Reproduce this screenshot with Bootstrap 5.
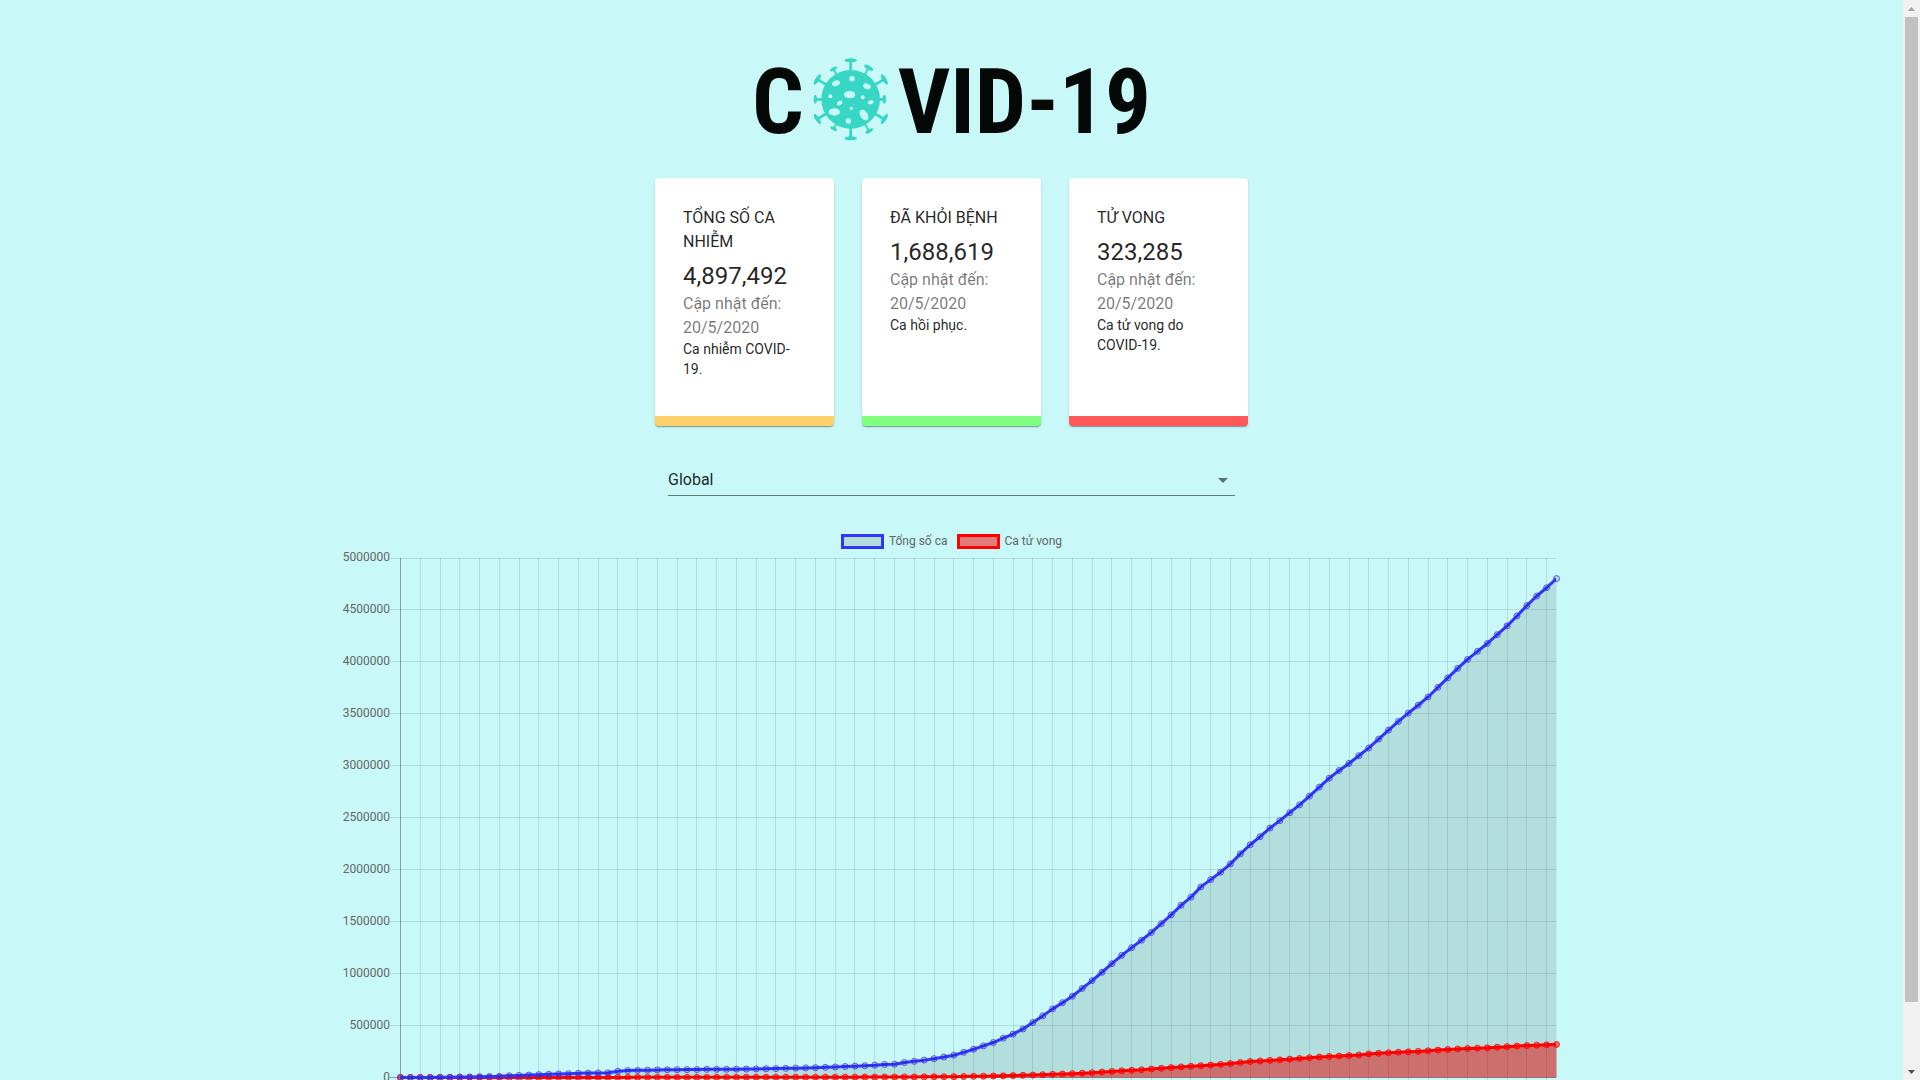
<!DOCTYPE html>
<html lang="vi">
<head>
<meta charset="utf-8">
<meta name="viewport" content="width=device-width, initial-scale=1">
<title>COVID-19</title>
<link href="https://cdn.jsdelivr.net/npm/bootstrap@5.3.0/dist/css/bootstrap.min.css" rel="stylesheet">
<style>
  body { font-family: Roboto, "Noto Sans", sans-serif; background: #c8f8f8; color: rgba(0,0,0,.87); }
  .wordmark { font-family: "Roboto Condensed", "Liberation Sans Narrow", "Liberation Sans", sans-serif; font-weight: 700; font-size: 91px; line-height: 80px; color: #040807; margin-top: 57px; margin-bottom: 36px; gap: 8px; }
  .stats { gap: 28px; max-width: 593px; }
  .stat-card { flex: 1 1 0; background: #fff; border-radius: 4px; border-bottom: 10px solid; padding: 28px 28px 37px; box-shadow: 0 2px 1px -1px rgba(0,0,0,.2), 0 1px 1px rgba(0,0,0,.14), 0 1px 3px rgba(0,0,0,.12); }
  .stat-infected { border-bottom-color: #ffcf69; }
  .stat-recovered { border-bottom-color: #80ff80; }
  .stat-deaths { border-bottom-color: #ff5858; }
  .stat-title { font-size: 16px; line-height: 24px; font-weight: 400; margin: 0 0 6px; }
  .stat-value { font-size: 24px; line-height: 32px; }
  .stat-date { font-size: 16px; line-height: 24px; color: rgba(0,0,0,.54); margin-bottom: -1px; }
  .stat-note { font-size: 14px; line-height: 20px; }
  .picker { max-width: 567px; margin-top: 38px; margin-bottom: 38px; }
  .picker select { height: 32px; font-size: 16px; line-height: 24px; padding: 4px 24px 3px 0; border: 0; border-bottom: 1px solid rgba(0,0,0,.5); border-radius: 0; background: transparent; color: inherit; appearance: none; }
  .picker svg { pointer-events: none; fill: rgba(0,0,0,.54); }
  .chart { max-width: 1219px; font-size: 12px; color: #666; }
  .chart-legend { height: 15px; line-height: 14px; gap: 9px; }
  .legend-item { gap: 5px; }
  .swatch { width: 43px; height: 15px; border: 3px solid; }
  .swatch-cases { border-color: #3333ff; background: rgba(0,0,0,.1); }
  .swatch-deaths { border-color: #ff0000; background: rgba(255,0,0,.5); }
  .chart text { fill: #666; font-size: 12px; }
  .scroll-track { width: 17px; background: #f1f1f1; }
  .scroll-arrow { height: 17px; }
  .scroll-thumb { width: 13px; height: 94.2%; background: #c1c1c1; }
</style>
<script src="https://cdn.jsdelivr.net/npm/bootstrap@5.3.0/dist/js/bootstrap.bundle.min.js"></script>
</head>
<body>
<div class="d-flex vh-100 overflow-hidden">
  <main class="flex-grow-1 d-flex flex-column align-items-center overflow-hidden">
    <h1 class="wordmark d-flex align-items-center">
      <span class="pt-1">C</span>
      <svg width="78" height="85" viewBox="185 50 234 255" role="img" aria-label="O">
        <g stroke="#38d6c4" stroke-width="8" fill="none">
          <path d="M301 60V294M201 117L401 236M401 117L201 236M195 177H402"/>
          <path stroke-width="6" d="M249 86L356 272M355 82L250 265"/>
        </g>
        <g fill="#38d6c4">
          <circle cx="301" cy="177" r="88"/>
          <ellipse cx="301" cy="60" rx="19" ry="6"/>
          <ellipse cx="301" cy="294" rx="19" ry="6"/>
          <ellipse cx="201" cy="117" rx="18" ry="6" transform="rotate(-58 201 117)"/>
          <ellipse cx="402" cy="117" rx="18" ry="6" transform="rotate(58 402 117)"/>
          <ellipse cx="201" cy="236" rx="18" ry="6" transform="rotate(58 201 236)"/>
          <ellipse cx="402" cy="236" rx="18" ry="6" transform="rotate(-58 402 236)"/>
          <ellipse cx="195" cy="177" rx="5" ry="13"/>
          <ellipse cx="402" cy="177" rx="5" ry="13"/>
          <ellipse cx="250" cy="86" rx="12" ry="5" transform="rotate(-28 250 86)"/>
          <ellipse cx="355" cy="82" rx="15" ry="6" transform="rotate(30 355 82)"/>
          <ellipse cx="250" cy="265" rx="11" ry="5" transform="rotate(30 250 265)"/>
          <ellipse cx="357" cy="272" rx="13" ry="5" transform="rotate(-30 357 272)"/>
        </g>
        <g fill="#c8f8f8">
          <circle cx="305" cy="115" r="8"/>
          <ellipse cx="257" cy="129" rx="12" ry="8" transform="rotate(-20 257 129)"/>
          <ellipse cx="350" cy="138" rx="12" ry="8" transform="rotate(25 350 138)"/>
          <ellipse cx="298" cy="163" rx="17" ry="11"/>
          <circle cx="240" cy="168" r="6"/>
          <circle cx="337" cy="171" r="6"/>
          <ellipse cx="268" cy="188" rx="9" ry="6" transform="rotate(-30 268 188)"/>
          <ellipse cx="361" cy="186" rx="9" ry="6" transform="rotate(-20 361 186)"/>
          <circle cx="303" cy="204" r="5"/>
          <ellipse cx="252" cy="215" rx="17" ry="11"/>
          <ellipse cx="341" cy="224" rx="11" ry="18" transform="rotate(-32 341 224)"/>
          <circle cx="294" cy="242" r="8"/>
        </g>
      </svg>
      <span class="pt-1">VID-19</span>
    </h1>

    <section class="stats d-flex w-100">
      <article class="stat-card stat-infected">
        <h2 class="stat-title">TỔNG SỐ CA NHIỄM</h2>
        <div class="stat-value">4,897,492</div>
        <div class="stat-date">Cập nhật đến: 20/5/2020</div>
        <div class="stat-note">Ca nhiễm COVID-19.</div>
      </article>
      <article class="stat-card stat-recovered">
        <h2 class="stat-title">ĐÃ KHỎI BỆNH</h2>
        <div class="stat-value">1,688,619</div>
        <div class="stat-date">Cập nhật đến: 20/5/2020</div>
        <div class="stat-note">Ca hồi phục.</div>
      </article>
      <article class="stat-card stat-deaths">
        <h2 class="stat-title">TỬ VONG</h2>
        <div class="stat-value">323,285</div>
        <div class="stat-date">Cập nhật đến: 20/5/2020</div>
        <div class="stat-note">Ca tử vong do COVID-19.</div>
      </article>
    </section>

    <div class="picker position-relative w-100">
      <select class="d-block w-100" aria-label="Global"><option>Global</option></select>
      <svg class="position-absolute end-0 top-0 mt-1" width="24" height="24" viewBox="0 0 24 24" aria-hidden="true"><path d="M7 10l5 5 5-5z"/></svg>
    </div>

    <section class="chart w-100">
      <div class="chart-legend d-flex justify-content-center">
        <span class="legend-item d-flex"><span class="swatch swatch-cases"></span>Tổng số ca</span>
        <span class="legend-item d-flex"><span class="swatch swatch-deaths"></span>Ca tử vong</span>
      </div>
      <svg id="plot" class="d-block w-100"></svg>
    </section>
  </main>

  <div class="scroll-track flex-shrink-0 d-flex flex-column align-items-center" aria-hidden="true">
    <svg class="scroll-arrow flex-shrink-0" width="17" height="17"><path d="M5 11L8.500 7 12 11z" fill="#a3a3a3"/></svg>
    <div class="flex-grow-1 w-100 d-flex justify-content-center"><div class="scroll-thumb"></div></div>
    <svg class="scroll-arrow flex-shrink-0" width="17" height="17"><path d="M5 7L8.500 11 12 7z" fill="#505050"/></svg>
  </div>
</div>

<script>
const cases = [555,654,941,1434,2118,2927,5578,6166,8234,9927,12038,16787,19881,23892,27635,30794,34391,37120,40150,42762,44802,45221,60368,66885,69030,71224,73258,75136,75639,76197,76819,78572,78958,79525,80406,81388,82745,84112,86011,88369,90304,92840,95120,97886,101800,105830,109821,113590,118620,125875,128343,145205,156101,167453,181574,197102,214821,242570,272208,304507,336953,378235,418045,467653,529591,593291,660693,720140,782389,857487,932605,1013303,1095917,1176059,1249737,1321427,1396438,1480200,1565278,1657526,1735650,1834721,1904838,1976191,2056054,2152437,2240190,2317758,2401378,2472258,2549123,2623960,2708884,2795000,2881000,2955000,3023000,3097000,3172000,3256846,3343777,3427343,3506729,3583055,3662691,3755341,3845718,3938064,4024009,4101699,4177502,4261747,4347018,4442163,4542347,4634068,4713620,4801943];
const deaths = [17,18,26,42,56,82,131,133,171,213,259,362,426,492,564,634,719,806,906,1013,1113,1118,1371,1523,1666,1770,1868,2007,2122,2247,2251,2458,2469,2629,2708,2770,2814,2872,2941,2996,3085,3160,3254,3348,3460,3558,3802,3988,4262,4615,4720,5404,5819,6440,7126,7905,8733,9867,11299,12973,14651,16505,18625,21181,23970,27198,30652,33925,37582,42107,46809,52983,58787,64606,69374,74565,81865,88338,95455,102525,108503,114091,119482,125984,134177,143801,153822,159511,165044,169986,176583,183066,190872,197162,202881,206567,211177,217183,227687,233388,238650,243808,247470,251537,257239,263831,269567,274898,279311,282709,286330,291942,297197,302418,307666,311781,315185,318481];
const MAX = 5000000, STEP = 500000;

function draw() {
  const svg = document.getElementById('plot');
  const W = svg.parentNode.clientWidth;
  const left = 58, right = W - 5, top = 9, h = W * 0.4262, bottom = top + h;
  svg.setAttribute('height', Math.ceil(bottom + 70));
  const px = i => left + 0.5 + (right - left) * i / (cases.length - 1);
  const py = v => bottom - h * v / MAX;
  const snap = v => Math.floor(v) + 0.5;
  let out = '';
  const line = (x1, y1, x2, y2, zero) => {
    out += `<path d="M${x1} ${y1}L${x2} ${y2}" stroke="rgba(0,0,0,${zero ? 0.35 : 0.1})"/>`;
  };
  for (let v = MAX; v >= 0; v -= STEP) {
    const y = snap(py(v));
    line(left - 10, y, right, y, v === 0);
    out += `<text x="${left - 10}" y="${Math.round(py(v) + 3)}" text-anchor="end">${v}</text>`;
  }
  for (let i = 0; i < cases.length; i += 2) {
    const x = snap(px(i));
    line(x, top, x, bottom + 10, i === 0);
  }
  const track = data => data.map((v, i) => px(i).toFixed(2) + ' ' + py(v).toFixed(2)).join('L');
  const area = (data, fill) => {
    out += `<path d="M${px(0)} ${py(0)}L${track(data)}L${px(data.length - 1)} ${py(0)}Z" fill="${fill}"/>`;
  };
  const curve = (data, color, fill) => {
    out += `<path d="M${track(data)}" fill="none" stroke="${color}" stroke-width="3" stroke-linejoin="round" clip-path="url(#plotArea)"/>`;
    data.forEach((v, i) => {
      out += `<circle cx="${px(i)}" cy="${py(v)}" r="3" fill="${fill}" stroke="${color}" stroke-opacity=".8"/>`;
    });
  };
  out += `<clipPath id="plotArea"><rect x="${left}" y="${top}" width="${right - left}" height="${h + 2}"/></clipPath>`;
  area(deaths, 'rgba(255,0,0,.5)');
  area(cases, 'rgba(0,0,0,.1)');
  curve(deaths, '#ff0000', 'rgba(255,0,0,.5)');
  curve(cases, '#3333ff', 'rgba(0,0,0,.1)');
  svg.innerHTML = out;
}
draw();
addEventListener('resize', draw);
</script>
</body>
</html>
